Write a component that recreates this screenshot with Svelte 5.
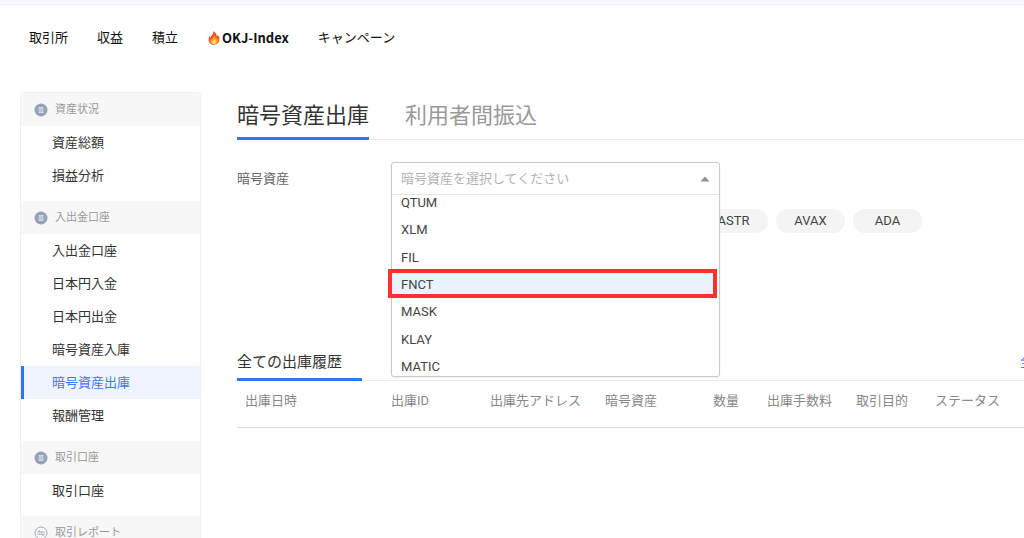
<script>
	let menu = ["取引所", "収益", "積立", "OKJ-Index", "キャンペーン"]

	let groups = [
		{title: "資産状況", icon: "list", items: ["資産総額", "損益分析"]},
		{title: "入出金口座", icon: "list", items: ["入出金口座", "日本円入金", "日本円出金", "暗号資産入庫", "暗号資産出庫", "報酬管理"]},
		{title: "取引口座", icon: "list", items: ["取引口座"]},
		{title: "取引レポート", icon: "swap", items: []},
	]
	let currentPage = "暗号資産出庫"

	let tabs = ["暗号資産出庫", "利用者間振込"]
	let activeTab = tabs[0]

	let coins = ["QTUM", "XLM", "FIL", "FNCT", "MASK", "KLAY", "MATIC"]
	let selectedCoin = "FNCT"
	let keyword = ""

	let shortcuts = ["ASTR", "AVAX", "ADA"]

	let columns = ["出庫日時", "出庫ID", "出庫先アドレス", "暗号資産", "数量", "出庫手数料", "取引目的", "ステータス"]

	function selectCoin(coin){
		selectedCoin = coin
	}
</script>

<div class="page">
	<header>
		<nav>
			{#each menu as entry}
				<a href="#top" class:hot={entry === "OKJ-Index"}>
					{#if entry === "OKJ-Index"}
						<svg class="fire" viewBox="0 0 16 16" aria-hidden="true">
							<path fill="#f9522b" d="M7.2 0.4C10 1.8 11.2 4.2 11.2 6.4c.6-.5.9-1.200.8-2.200C13.600 5.800 14.400 7.800 14.200 10c-.3 3.400-2.800 5.600-6.200 5.600S2 13.400 1.800 10.200C1.700 8.200 2.500 6.700 3.300 5.400c.1 1 .4 1.700 1 2.200C4.200 5.200 7.900 3.800 7.200.4z"/>
							<path fill="#ffa51f" d="M8 5.200c1.900 1.300 2.300 2.800 2.200 4 .6-.3.900-.8 1.100-1.400.9 1.100 1.300 2.200 1.100 3.500-.3 2.300-2 3.800-4.400 3.800s-4.200-1.500-4.300-3.700c0-1.100.4-1.900 1-2.600.2.600.5 1 1 1.200C5.800 8.200 8.200 7.300 8 5.200z"/>
							<path fill="#ffe36e" d="M8.100 9.400c1.600 1 2.300 2.100 2.200 3.400-.1 1.400-1 2.200-2.300 2.200s-2.300-.8-2.300-2.100c0-1.500 2-1.900 2.400-3.500z"/>
						</svg>
					{/if}{entry}
				</a>
			{/each}
		</nav>
	</header>

	<div class="body">
		<aside>
			{#each groups as group}
				<section>
					<h3>
						{#if group.icon === "list"}
							<svg viewBox="0 0 14 14" aria-hidden="true">
								<circle cx="7" cy="7" r="6.500" fill="#93a3b6"/>
								<path d="M4.500 4.800h5M4.500 7h5M4.500 9.200h5" stroke="#edf0f4" stroke-width="1.200"/>
							</svg>
						{:else}
							<svg viewBox="0 0 14 14" fill="none" stroke="#9aa9bb" aria-hidden="true">
								<circle cx="7" cy="7" r="6"/>
								<path d="M10.500 6H3.800l2-2M3.500 8.200h6.700l-2 2"/>
							</svg>
						{/if}
						{group.title}
					</h3>
					{#each group.items as item}
						<a href="#top" class:current={item === currentPage}>{item}</a>
					{/each}
				</section>
			{/each}
		</aside>

		<main>
			<div class="tabs">
				{#each tabs as tab}
					<button class:active={tab === activeTab} on:click={() => activeTab = tab}>{tab}</button>
				{/each}
			</div>

			<div class="row">
				<label for="coin">暗号資産</label>
				<div class="field">
					<div class="dropdown">
						<div class="control">
							<input id="coin" type="text" placeholder="暗号資産を選択してください" autocomplete="off" bind:value={keyword}>
							<svg viewBox="0 0 10 6" aria-hidden="true"><path d="M5 0.500L9.500 5.500H0.500z" fill="#8f8f8f"/></svg>
						</div>
						<div class="list">
							<div class="options">
								{#each coins as coin}
									<button class:selected={coin === selectedCoin} on:click={() => selectCoin(coin)}>{coin}</button>
								{/each}
							</div>
						</div>
					</div>
					<div class="chips">
						{#each shortcuts as coin}
							<button on:click={() => selectCoin(coin)}>{coin}</button>
						{/each}
					</div>
				</div>
			</div>

			<div class="history">
				<h2>全ての出庫履歴</h2>
				<a href="#top">全て</a>
			</div>
			<table>
				<thead>
					<tr>
						{#each columns as column}
							<th scope="col">{column}</th>
						{/each}
					</tr>
				</thead>
			</table>
		</main>
	</div>
</div>

<style>
	:global(body) {
		margin: 0;
		overflow: hidden;
	}

	.page {
		font-family: Roboto, "Noto Sans CJK JP", sans-serif;
		font-size: 13px;
		line-height: 20px;
		color: #333;
		background: #fff;
		border-top: 4px solid #f6f8fd;
		overflow: hidden;
	}

	button, input {
		font: inherit;
		color: inherit;
		border: 0;
		background: none;
		padding: 0;
	}

	a {
		color: inherit;
		text-decoration: none;
	}

	header {
		border-top: 1px solid #eceef3;
		padding: 23px 29px 21px;
	}

	nav {
		display: flex;
		gap: 29px;
		color: #111;
	}

	nav a {
		display: flex;
		align-items: center;
		white-space: nowrap;
	}

	.hot {
		font-family: "Noto Sans CJK JP", sans-serif;
		font-weight: 700;
	}

	.fire {
		width: 14px;
		height: 14px;
		margin-right: 1px;
	}

	.body {
		display: flex;
		align-items: flex-start;
		gap: 36px;
		padding: 23px 0 0 20px;
	}

	aside {
		flex: 0 0 179px;
		border: 1px solid #f0f0f0;
		border-radius: 4px;
		overflow: hidden;
	}

	section {
		padding-bottom: 9px;
	}

	h3 {
		display: flex;
		align-items: center;
		gap: 7px;
		margin: 0;
		padding: 1px 0 0 13px;
		font-size: 11px;
		font-weight: 400;
		line-height: 32px;
		color: #999;
		background: #f7f7f7;
	}

	h3 svg {
		width: 14px;
		height: 14px;
	}

	section a {
		display: block;
		padding-left: 31px;
		line-height: 33px;
	}

	section a.current {
		padding-left: 28px;
		border-left: 3px solid #2f74f5;
		color: #3a7bf7;
		background: #eff4ff;
	}

	main {
		flex: 1 0 809px;
	}

	.tabs {
		display: flex;
		gap: 36px;
		padding-top: 4px;
		border-bottom: 1px solid #ebebeb;
	}

	.tabs button {
		margin-bottom: -1px;
		padding: 4px 0 5px;
		border-bottom: 3px solid transparent;
		font-size: 22px;
		line-height: 32px;
		color: #999;
	}

	.tabs .active {
		border-color: #3075f6;
		color: #333;
	}

	.row {
		display: flex;
		padding-top: 22px;
	}

	.row label {
		flex: 0 0 154px;
		line-height: 33px;
		color: #666;
	}

	.field {
		position: relative;
		flex: 1;
		padding-top: 47px;
	}

	.dropdown {
		position: absolute;
		top: 0;
		left: 0;
		width: 327px;
		border: 1px solid #c9c9c9;
		border-radius: 3px;
		background: #fff;
		box-shadow: 0 1px 2px rgba(0, 0, 0, 0.08);
	}

	.control {
		display: flex;
		align-items: center;
		padding: 0 9px;
		border-bottom: 1px solid #e4e4e4;
	}

	.control input {
		flex: 1;
		height: 31px;
		outline: none;
	}

	.control input::placeholder {
		color: #b3b3b3;
		opacity: 1;
	}

	.control svg {
		width: 10px;
		height: 6px;
	}

	/* the list is scrolled a little, so the first option starts above it */
	.list {
		display: flex;
		height: 181px;
		overflow-y: clip;
	}

	.options {
		flex: 1;
		display: grid;
		grid-auto-rows: 1fr;
		height: 192px;
		margin-top: -6px;
	}

	.options button {
		position: relative;
		padding-left: 9px;
		text-align: left;
		color: #444;
	}

	.options .selected::before {
		content: "";
		position: absolute;
		z-index: -1;
		inset: -2px 2px 1px -4px;
		border: 4px solid #fd3131;
		background: #e9f3ff;
	}

	.options .selected {
		z-index: 1;
	}

	.chips {
		display: grid;
		grid-template-columns: repeat(7, 69px);
		gap: 8px;
	}

	.chips button {
		border-radius: 12px;
		line-height: 24px;
		color: #444;
		background: #f4f4f4;
	}

	.chips button:first-child {
		grid-column-start: 5;
	}

	.history {
		display: flex;
		justify-content: space-between;
		margin-top: 110px;
		border-bottom: 1px solid #ebebeb;
	}

	.history h2 {
		margin: 0 0 -1px;
		padding: 7px 20px 4px 0;
		border-bottom: 3px solid #3075f6;
		font-size: 15px;
		font-weight: 400;
		line-height: 24px;
	}

	.history a {
		padding-top: 1px;
		line-height: 36px;
		color: #3a7bf7;
	}

	table {
		width: 100%;
		table-layout: fixed;
		border-collapse: collapse;
		border-bottom: 1px solid #e0e0e0;
	}

	th {
		padding: 10px 0 16px 8px;
		font-weight: 400;
		text-align: left;
		white-space: nowrap;
		color: #888;
	}

	th:nth-child(1) {
		width: 138px;
	}

	th:nth-child(2) {
		width: 91px;
	}

	th:nth-child(3) {
		width: 107px;
	}

	th:nth-child(4) {
		width: 68px;
	}

	th:nth-child(5) {
		width: 58px;
		padding-right: 20px;
		text-align: right;
	}

	th:nth-child(6) {
		width: 81px;
	}

	th:nth-child(7) {
		width: 71px;
	}
</style>
